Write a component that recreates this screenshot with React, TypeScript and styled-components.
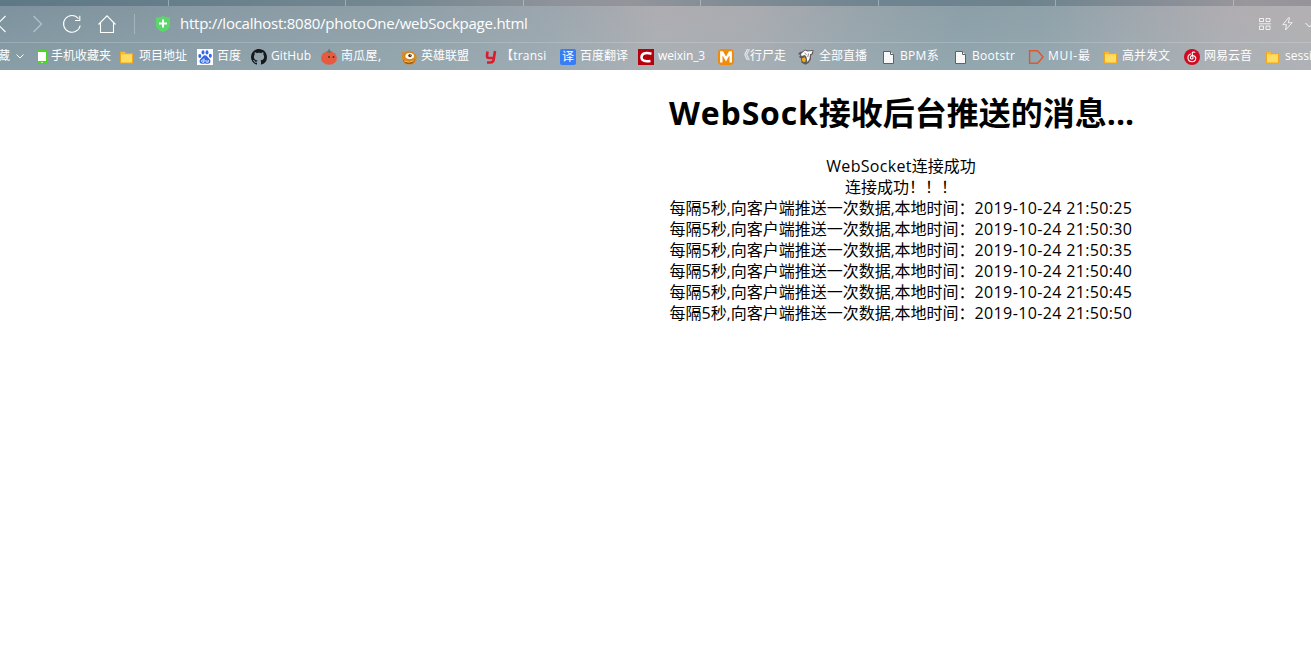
import React from "react";
import styled, { createGlobalStyle } from "styled-components";

const GlobalStyle = createGlobalStyle`
  * { box-sizing: border-box; }
  body { margin: 0; background: #fff; overflow: hidden; }
`;

const Window = styled.div`
  width: 1311px;
  height: 645px;
  overflow: hidden;
  background: #fff;
  font-family: "Open Sans", "Noto Sans CJK SC", sans-serif;
`;

const Chrome = styled.header`
  height: 70px;
  display: flex;
  flex-direction: column;
  color: #fff;
  background: linear-gradient(180deg, rgba(160, 185, 190, 0) 10%, rgba(160, 185, 190, 0.3) 100%), linear-gradient(
    100deg,
    #7d929d 0%,
    #8799a3 14%,
    #8f9fa8 30%,
    #9ca6ae 42%,
    #aeadb1 50%,
    #aaabb0 57%,
    #98a4ab 65%,
    #8c9fa8 73%,
    #8fa1a9 79%,
    #a0a7ae 86%,
    #b0adb1 93%,
    #b4b0b3 100%
  );
`;

const TabStrip = styled.div`
  height: 6px;
  flex: none;
  display: flex;
  background: linear-gradient(
    90deg,
    #5f7886 0%,
    #677f8b 14%,
    #748891 30%,
    #8e929a 42%,
    #93959b 48%,
    #7f8c94 56%,
    #6e8490 68%,
    #6c838e 78%,
    #828c94 87%,
    #99969c 95%,
    #96949a 100%
  );
`;

const Tab = styled.div<{ $width: number }>`
  width: ${(p) => p.$width}px;
  flex: none;
  border-right: 1px solid rgba(225, 232, 236, 0.4);
`;

const AddressBar = styled.div`
  height: 37px;
  flex: none;
  display: flex;
  align-items: center;
  border-bottom: 1px solid rgba(255, 255, 255, 0.18);
`;

const NavIcon = styled.svg<{ $gap?: number }>`
  flex: none;
  display: block;
  overflow: visible;
  margin-left: ${(p) => p.$gap ?? 0}px;
  fill: none;
  stroke: #fff;
`;

const Separator = styled.div`
  width: 1px;
  height: 20px;
  margin-left: 18px;
  background: rgba(255, 255, 255, 0.25);
`;

const Url = styled.div`
  flex: 1;
  margin: 0 1px 2px 10px;
  font-size: 15px;
  line-height: 20px;
  letter-spacing: -0.24px;
  white-space: nowrap;
`;

const BookmarkBar = styled.nav`
  height: 27px;
  flex: none;
  display: flex;
  align-items: center;
  overflow: hidden;
  font-size: 12px;
`;

const Bookmark = styled.div<{ $width: number; $gap?: number }>`
  width: ${(p) => p.$width}px;
  flex: none;
  display: flex;
  align-items: center;
  gap: ${(p) => p.$gap ?? 4}px;
  white-space: nowrap;
`;

const BookmarkIcon = styled.svg`
  width: 16px;
  height: 16px;
  flex: none;
  display: block;
`;

const BookmarkLabel = styled.span<{ $tracking?: number }>`
  margin-bottom: 2px;
  line-height: 16px;
  letter-spacing: ${(p) => p.$tracking ?? 0}px;
`;

const Overflowed = styled.div`
  width: 36px;
  flex: none;
  display: flex;
  align-items: center;
  gap: 6px;
  margin-left: -2px;
`;

const Page = styled.main`
  width: 464px;
  margin-left: 669px;
  padding-top: 21px;
  color: #000;
  text-align: center;
  white-space: nowrap;
`;

const Title = styled.h1`
  margin: 0 0 22px;
  font-size: 32px;
  line-height: 43px;
  font-weight: 700;
  display: flex;
`;

const TitleLatin = styled.span<{ $tracking: number }>`
  letter-spacing: ${(p) => p.$tracking}px;
`;

const Message = styled.div`
  height: 21px;
  line-height: 21px;
  font-size: 16px;
`;

const Latin = styled.span<{ $size?: number; $tracking?: number }>`
  font-size: ${(p) => p.$size ?? 16}px;
  letter-spacing: ${(p) => p.$tracking ?? 0}px;
`;

const Folder = () => (
  <BookmarkIcon viewBox="0 0 16 16">
    <path d="M1 2.500h5l1.200 1.500h6.800v10.500h-13z" fill="#f0a71d" />
    <path d="M2 6h11v7.500h-11z" fill="#ffdd62" />
    <path d="M2 4h4M2 5.500h11" stroke="#ffce4b" />
  </BookmarkIcon>
);

const Phone = () => (
  <BookmarkIcon viewBox="0 0 16 16">
    <rect x="3" y="1" width="10" height="14" rx="1" fill="#4dd526" />
    <rect x="4" y="3" width="8" height="9" fill="#fff" />
    <rect x="7" y="13" width="2" height="1" fill="#b9f5a6" />
  </BookmarkIcon>
);

const Paw = () => (
  <BookmarkIcon viewBox="0 0 16 16">
    <rect width="16" height="16" fill="#fff" />
    <g fill="#3468e8">
      <ellipse cx="2.800" cy="7" rx="1.500" ry="2" />
      <ellipse cx="6" cy="3.400" rx="1.500" ry="2.100" />
      <ellipse cx="10" cy="3.400" rx="1.500" ry="2.100" />
      <ellipse cx="13.300" cy="6.800" rx="1.500" ry="2" />
      <path d="M8 6.300c2 0 2.500 2 4.200 3.500 2.200 2 1.300 5-1.200 5-1.200 0-1.800-.3-3-.3s-1.800.3-3 .3c-2.500 0-3.400-3-1.200-5C5.500 8.300 6 6.300 8 6.300z" />
    </g>
    <path d="M7 9.500v3.700H5.500c-1.300 0-1.300-2.200 0-2.200H7M9 11v1.500c0 .5.300.7.700.7h1.500V11" stroke="#fff" strokeWidth=".9" fill="none" />
  </BookmarkIcon>
);

const GitHub = () => (
  <BookmarkIcon viewBox="0 0 16 16">
    <path
      fill="#16191c"
      d="M8 0C3.580 0 0 3.580 0 8c0 3.540 2.290 6.530 5.470 7.590.4.070.55-.17.55-.38 0-.19-.01-.82-.01-1.490-2.010.37-2.530-.49-2.690-.94-.09-.23-.48-.94-.82-1.130-.28-.15-.68-.52-.01-.53.63-.01 1.080.58 1.230.82.72 1.210 1.870.87 2.330.66.070-.52.28-.87.51-1.070-1.780-.2-3.640-.89-3.640-3.950 0-.87.31-1.590.82-2.150-.08-.2-.36-1.020.08-2.120 0 0 .67-.21 2.200.82.64-.18 1.320-.27 2-.27s1.360.09 2 .27c1.530-1.040 2.200-.82 2.200-.82.44 1.100.16 1.920.08 2.120.51.56.82 1.270.82 2.150 0 3.070-1.870 3.750-3.650 3.950.29.25.54.73.54 1.480 0 1.070-.01 1.930-.01 2.200 0 .21.15.46.55.38A8.010 8.010 0 0 0 16 8c0-4.420-3.580-8-8-8z"
    />
  </BookmarkIcon>
);

const Pumpkin = () => (
  <BookmarkIcon viewBox="0 0 16 16">
    <ellipse cx="8" cy="9" rx="8" ry="6.800" fill="#e65a40" />
    <path d="M5 2.500l2.300-.5L7.500.3h1.300L9 2l2 .5-2.700 1.200z" fill="#2e8c68" />
    <circle cx="8" cy="8" r=".9" fill="#472c2b" />
    <circle cx="12.500" cy="8" r=".9" fill="#472c2b" />
  </BookmarkIcon>
);

const Critter = () => (
  <BookmarkIcon viewBox="0 0 16 16">
    <path d="M0 3l3 .5C6 1 11 1 13 4c3 1 3.500 5 2 6.500-.5 3-2.500 5-6.500 5S2 13.500 1.500 10C.5 8 1 6 1.500 5z" fill="#df8918" />
    <path d="M2 11q6 3 12-.5-1 4.500-6 4.500t-6-4z" fill="#9d570f" />
    <path d="M3 12q5 2.500 10-.3" stroke="#ffc54c" fill="none" />
    <ellipse cx="8.700" cy="7" rx="4.800" ry="3.600" fill="#fffbe5" stroke="#b06a18" strokeWidth=".6" />
    <circle cx="9" cy="6.600" r="1.700" fill="#4b2719" />
    <circle cx="9.600" cy="6" r=".5" fill="#fff" />
  </BookmarkIcon>
);

const YLetter = () => (
  <BookmarkIcon viewBox="0 0 16 16">
    <path d="M4.500 2.500L4 7q0 2 2 2h4.500M12 2l-1.300 8.500q-.5 3-3.200 3H4" stroke="#dc1c2c" strokeWidth="2.600" fill="none" />
  </BookmarkIcon>
);

const Badge = styled.span<{ $bg: string; $radius: number; $size: number }>`
  width: 16px;
  height: 16px;
  flex: none;
  display: flex;
  align-items: center;
  justify-content: center;
  border-radius: ${(p) => p.$radius}px;
  background: ${(p) => p.$bg};
  font-size: ${(p) => p.$size}px;
  line-height: 16px;
`;

const CLogo = () => (
  <BookmarkIcon viewBox="0 0 16 16">
    <rect width="16" height="16" fill="#b7000d" />
    <path d="M13.500 4.700Q3.700 2.500 3.500 8.200 3.500 13.300 12.500 11.900" stroke="#fff" strokeWidth="2.500" fill="none" />
  </BookmarkIcon>
);

const MLogo = () => (
  <BookmarkIcon viewBox="0 0 16 16">
    <rect width="16" height="16" rx="4" fill="#f08c09" />
    <path d="M3.300 13.500V3.500h1L8 10l3.700-6.500h1v10" stroke="#fff" strokeWidth="2.400" fill="none" />
  </BookmarkIcon>
);

const Bird = () => (
  <BookmarkIcon viewBox="0 0 16 16">
    <path d="M0 5l2-2 2.500-.5L7 .5l3 1L15.500 1 15 5l-2 1.500v4L10.500 14l-3 1.700-4-2L3 9.500 1 8l1.500-2z" fill="#625b5c" />
    <path d="M3 5l4-3.500 2.500 1 5-.5-1 2.800-1.500.5-.5 4.500-2 3.500L8.500 8 7 6 3.500 7z" fill="#fff" />
    <path d="M3.800 9.500L6.500 8.200 8 10.500 7 13.200l-2.500-.7z" fill="#edae16" />
    <path d="M6.500 4l2 1.500M10.500 4.500L9.800 8" stroke="#6b6565" strokeWidth=".8" />
  </BookmarkIcon>
);

const Doc = () => (
  <BookmarkIcon viewBox="0 0 16 16">
    <path d="M3.500 2.500h7l3 3v9h-10z" fill="#f8f8f8" stroke="#5d6264" />
    <path d="M10.500 2.500v3h3" fill="#fff" stroke="#5d6264" />
  </BookmarkIcon>
);

const Tag = () => (
  <BookmarkIcon viewBox="0 0 16 16">
    <path d="M1.600 1.700h8L15 8l-5.400 6.300h-8z" fill="none" stroke="#df5630" strokeWidth="1.400" />
  </BookmarkIcon>
);

const Music = () => (
  <BookmarkIcon viewBox="0 0 16 16">
    <circle cx="8" cy="8" r="8" fill="#cf0a22" />
    <path
      d="M10.800 3.300C9.500 2.700 8 3 8.200 4.500L9 8.500c.3 2-2.800 2-2.600 0C6.600 6.500 9 6 10.700 7.200c2.300 1.800.8 5.600-2.500 5.600-4.800 0-5.700-5.800-1.700-7.700"
      fill="none"
      stroke="#fff"
      strokeWidth="1.100"
      strokeLinecap="round"
    />
  </BookmarkIcon>
);

type Mark = { icon: React.ReactNode; label: string; width: number; gap?: number; tracking?: number };

const bookmarks: Mark[] = [
  { icon: <Phone />, label: "手机收藏夹", width: 85, gap: 1 },
  { icon: <Folder />, label: "项目地址", width: 78 },
  { icon: <Paw />, label: "百度", width: 54 },
  { icon: <GitHub />, label: "GitHub", width: 70, tracking: 0.1 },
  { icon: <Pumpkin />, label: "南瓜屋,", width: 80, tracking: 0.3 },
  { icon: <Critter />, label: "英雄联盟", width: 82 },
  { icon: <YLetter />, label: "【transi", width: 77, gap: 2, tracking: 0.2 },
  { icon: <Badge $bg="#377df5" $radius={2} $size={12}>译</Badge>, label: "百度翻译", width: 78 },
  { icon: <CLogo />, label: "weixin_3", width: 80, tracking: -0.1 },
  { icon: <MLogo />, label: "《行尸走", width: 80 },
  { icon: <Bird />, label: "全部直播", width: 82, gap: 5 },
  { icon: <Doc />, label: "BPM系", width: 72, tracking: 0.3 },
  { icon: <Doc />, label: "Bootstr", width: 76, tracking: 0.25 },
  { icon: <Tag />, label: "MUI-最", width: 75, tracking: 0.8 },
  { icon: <Folder />, label: "高并发文", width: 81, gap: 3 },
  { icon: <Music />, label: "网易云音", width: 81 },
  { icon: <Folder />, label: "session", width: 80, gap: 4 },
];

const times = ["21:50:25", "21:50:30", "21:50:35", "21:50:40", "21:50:45", "21:50:50"];

const tabs = [169, 177, 178, 177, 178, 177, 178];

export default function App() {
  return (
    <Window>
      <GlobalStyle />
      <Chrome>
        <TabStrip>
          {tabs.map((width, i) => (
            <Tab key={i} $width={width} />
          ))}
        </TabStrip>
        <AddressBar>
          <NavIcon width="6" height="18" viewBox="0 0 6 18">
            <path d="M5.500 1L-2.500 9l8 8" strokeWidth="1.100" />
          </NavIcon>
          <NavIcon $gap={27} width="10" height="18" viewBox="0 0 10 18" opacity=".4">
            <path d="M.5 1l8 8-8 8" strokeWidth="1.300" />
          </NavIcon>
          <NavIcon $gap={20} width="18" height="18" viewBox="0 0 18 18">
            <path d="M17.200 10.500A8.400 8.400 0 1 1 15.500 3.600M16.800.8v4.700H12" strokeWidth="1.100" />
          </NavIcon>
          <NavIcon $gap={17} width="18" height="18" viewBox="0 0 18 18">
            <path d="M.5 9.500L9 .8l8.500 8.700M2.500 7.800v9.700h13V7.800" strokeWidth="1.100" />
          </NavIcon>
          <Separator />
          <NavIcon $gap={21} width="14" height="16" viewBox="0 0 14 16">
            <path d="M0 1.500Q4 1.500 7 0q3 1.500 7 1.500V9q0 4.500-7 7Q0 13.500 0 9z" fill="#5bd66b" stroke="none" />
            <path d="M7 3.500v8M3 7.500h8" strokeWidth="2" />
          </NavIcon>
          <Url>http://localhost:8080/photoOne/webSockpage.html</Url>
          <NavIcon width="12" height="12" viewBox="0 0 12 12" opacity=".8">
            <path d="M.5.500h4v3h-4zM7 .5h4v3H7zM.5 8h4v3.500h-4zM7 8h4v3.500H7zM0 5.800h12" />
          </NavIcon>
          <NavIcon $gap={11} width="11" height="14" viewBox="0 0 11 14" opacity=".8">
            <path d="M6.500.7L.8 7.700h3.700L3.500 13l6.700-7.300H6.300L7.500.8z" />
          </NavIcon>
          <NavIcon $gap={12} width="6" height="6" viewBox="0 0 6 6">
            <path d="M.5 2l4 4 4-4" />
          </NavIcon>
        </AddressBar>
        <BookmarkBar>
          <Overflowed>
            <BookmarkLabel>藏</BookmarkLabel>
            <NavIcon width="8" height="5" viewBox="0 0 8 5">
              <path d="M.5.500l3.500 3.500L7.500.5" />
            </NavIcon>
          </Overflowed>
          {bookmarks.map((b, i) => (
            <Bookmark key={i} $width={b.width} $gap={b.gap}>
              {b.icon}
              <BookmarkLabel $tracking={b.tracking}>{b.label}</BookmarkLabel>
            </Bookmark>
          ))}
        </BookmarkBar>
      </Chrome>
      <Page>
        <Title>
          <TitleLatin $tracking={0.85}>WebSock</TitleLatin>接收后台推送的消息<TitleLatin $tracking={0}>...</TitleLatin>
        </Title>
        <Message>
          <Latin $tracking={0.3}>WebSocket</Latin>连接成功
        </Message>
        <Message>连接成功！！！</Message>
        {times.map((time) => (
          <Message key={time}>
            每隔<Latin>5</Latin>秒<Latin $size={15}>,</Latin>向客户端推送一次数据<Latin $size={15}>,</Latin>本地时间：
            <Latin $tracking={0.36}>2019-10-24 {time}</Latin>
          </Message>
        ))}
      </Page>
    </Window>
  );
}
